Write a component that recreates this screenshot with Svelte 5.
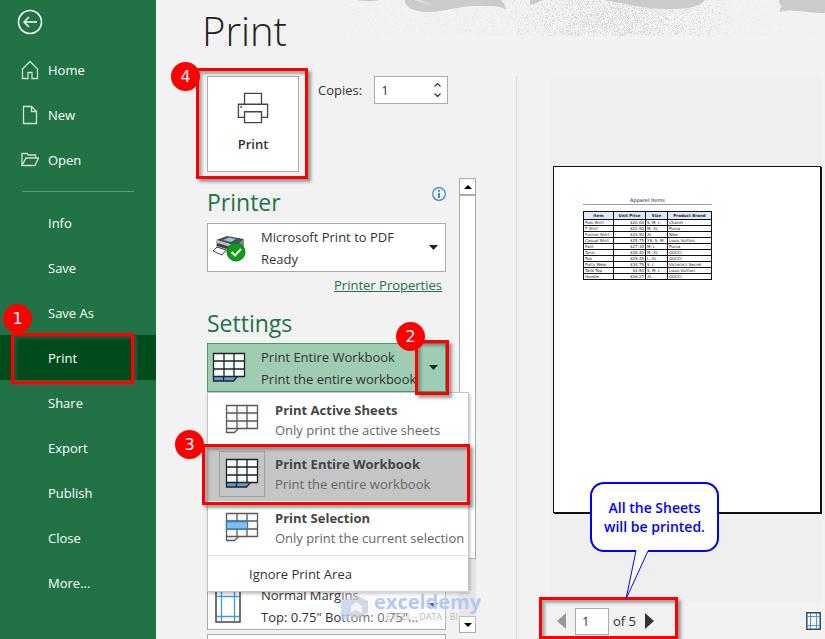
<script lang="ts">
  const topLinks = ['Home', 'New', 'Open'];
  const links = ['Info', 'Save', 'Save As', 'Print', 'Share', 'Export', 'Publish', 'Close', 'More...'];

  const printOptions = [
    { kind: 'active', title: 'Print Active Sheets', detail: 'Only print the active sheets' },
    { kind: 'workbook', title: 'Print Entire Workbook', detail: 'Print the entire workbook' },
    { kind: 'selection', title: 'Print Selection', detail: 'Only print the current selection' }
  ];

  const items = [
    ['Polo Shirt', '$20.00', 'S, M, L', 'Chanel'],
    ['T Shirt', '$22.50', 'M, XL', 'Puma'],
    ['Formal Shirt', '$24.50', 'XL', 'Nike'],
    ['Casual Shirt', '$25.75', 'XS, S, M', 'Louis Vuitton'],
    ['Pant', '$27.30', 'M, L', 'Puma'],
    ['Tunic', '$28.40', 'M, XL', 'GUCCI'],
    ['Top', '$29.45', 'L, XL', 'GUCCI'],
    ['Party Wear', '$34.75', 'S, L', "Victoria's Secret"],
    ['Tank Top', '$4.50', 'S, M, L', 'Louis Vuitton'],
    ['Hoodie', '$26.27', 'XL', 'GUCCI']
  ];

  let selected = $state('workbook');
  let copies = $state('1');
  let pageNo = $state('1');

  // Speckle for the header artwork, scattered between two x positions
  function speckle(count: number, from: number, to: number, seed: number): string {
    const next = () => {
      seed = (seed * 16807) % 2147483647;
      return seed / 2147483647;
    };
    let d = '';
    for (let i = 0; i < count; i++) {
      const x = Math.round(from + ((next() + next()) / 2) * (to - from));
      const y = Math.round(next() * 35);
      d += `M${x} ${y}h1v1h-1z`;
    }
    return d;
  }

  const faintDots = speckle(2600, -20, 510, 7);
  const denseDots = speckle(1700, 180, 400, 91);
</script>

{#snippet sheet(kind: string)}
  <svg class="sheet" width="34" height="32" viewBox="0 0 34 32" aria-hidden="true">
    <path d="M1.5 1.5h31v23h-8l-4 4.500h-19z" fill={kind === 'workbook' ? '#f6fdfb' : '#fafafa'} />
    {#if kind === 'workbook'}
      <path d="M1.500 24.500h24l-4 4.500h-20z" fill="#5b9fd8" />
    {/if}
    <g fill="none" stroke={kind === 'workbook' ? '#222' : '#5a5a5a'} stroke-width="1.3">
      <path d="M1.500 1.500h31v23h-31zM1.500 9h31M1.500 17h31M12 1.500v23M22 1.500v23" />
      {#if kind === 'workbook'}
        <path d="M1.500 24.500v4.500h20l4-4.500M11.500 24.500v4.500" />
      {:else}
        <path d="M1.500 24.500v4h8l4-4" />
      {/if}
    </g>
    {#if kind === 'selection'}
      <path d="M1.500 9.500h21v7.500h-21z" fill="#83bdec" stroke="#2f80c2" stroke-width="1.300" />
    {/if}
  </svg>
{/snippet}

{#snippet caret()}
  <svg width="9" height="5" viewBox="0 0 9 5" aria-hidden="true"><path d="M0 0h9l-4.500 5z" fill="#222" /></svg>
{/snippet}

<div class="backstage">
  <nav class="sidebar">
    <button class="back" aria-label="Back">
      <svg width="26" height="26" viewBox="0 0 26 26" fill="none" stroke="#fff" stroke-width="1.500">
        <circle cx="13" cy="13" r="11.500" />
        <path d="M20 13H7M12 8l-5 5 5 5" />
      </svg>
    </button>
    {#each topLinks as link}
      <a href="#{link}" class="nav-link with-icon">
        <svg width="18" height="20" viewBox="0 0 18 20" fill="none" stroke="#cfe0d5" stroke-width="1.300">
          {#if link === 'Home'}
            <path d="M1 9.500l8-8 8 8M1.500 9v9.500h5.500v-6h4v6h5.500V9" />
          {:else if link === 'New'}
            <path d="M2.500 1.500h8l5 5v12h-13zM10.500 1.500v5h5" />
          {:else}
            <path d="M1 15.500v-12h5l1.500 1.500h7v3M1 15.500l4-7.500h12.500l-3.500 7.500z" />
          {/if}
        </svg>
        {link}
      </a>
    {/each}
    <hr />
    {#each links as link}
      <a href="#{link}" class="nav-link" class:current={link === 'Print'}>
        {link}
        {#if link === 'Print'}
          <span class="mark mark-nav"></span>
          <span class="step step-nav">1</span>
        {/if}
      </a>
    {/each}
  </nav>

  <main>
    <svg class="artwork" width="495" height="37" viewBox="0 0 495 37" aria-hidden="true">
      <path d={faintDots} fill="#eaeaea" />
      <path d={denseDots} fill="#dadada" />
      <path d="M26 0h24c-6 1.500-16 1.500-24 0z" fill="#cbcbcb" />
      <path d="M75 0c0 8 10 12 22 12 20 0 28-6 50-6 12 0 24-1 29 4 0-4-2-7-5-10z" fill="#cbcbcb" />
      <path d="M84 0c6 2 12 4 20 5-5-2-10-3-14-5z" fill="#e2e2e2" />
      <path d="M200 0v5c6-1 9-4 14-5zM274 0c22 4 42 9 64 9 17 0 31-1 37-9z" fill="#cbcbcb" />
      <path d="M449 0c0 3 1 4 3 6-2 2-3 4-2 6 14-4 28 2 45 1V0z" fill="#cbcbcb" />
    </svg>

    <h1>Print</h1>

    <div class="columns">
      <section class="options">
        <div class="job">
          <div class="anchor">
            <button class="print-button">
              <svg width="32" height="32" viewBox="0 0 34 34" fill="#fff" stroke="#444" stroke-width="1.400">
                <path d="M8 13V1.500h18V13" />
                <path d="M8 27H1.500V13h31v14H26" />
                <path d="M8 21h18v11.500H8z" />
                <circle cx="4.500" cy="16" r="1" fill="#444" stroke="none" />
              </svg>
              Print
            </button>
            <span class="mark mark-button"></span>
            <span class="step step-button">4</span>
          </div>
          <label for="copies">Copies:</label>
          <div class="spinner">
            <input id="copies" type="text" bind:value={copies} />
            <div class="arrows">
              <button aria-label="More copies"><svg width="7" height="4" viewBox="0 0 7 4"><path d="M0.500 3.500l3-3 3 3" /></svg></button>
              <button aria-label="Fewer copies"><svg width="7" height="4" viewBox="0 0 7 4"><path d="M0.500 0.500l3 3 3-3" /></svg></button>
            </div>
          </div>
        </div>

        <div class="scroll-area">
          <div class="settings">
            <div class="heading">
              <h2>Printer</h2>
              <button class="info" aria-label="Printer status">
                <svg width="14" height="14" viewBox="0 0 14 14" fill="none" stroke="#2b88d0">
                  <circle cx="7" cy="7" r="6.300" stroke-width="1.200" />
                  <path d="M7 3v1.700M7 6v5" stroke-width="1.800" />
                </svg>
              </button>
            </div>

            <button class="combo">
              <span class="combo-icon">
                <svg width="34" height="28" viewBox="0 0 34 28" aria-hidden="true">
                  <path d="M4 6l11-4 17 3-7 7z" fill="#4b4f54" />
                  <path d="M11 6l6-2.500 7 1.500-5 3z" fill="#8fc3ec" />
                  <path d="M4 6l20 6v9L4 14z" fill="#b9bcc0" />
                  <path d="M24 12l8-7v8l-8 8z" fill="#85898e" />
                  <path d="M5 9l17 5v3L5 12z" fill="#3c3f43" />
                  <path d="M5 13l9 3-4 5-9-4z" fill="#fff" stroke="#444" />
                  <circle cx="24" cy="18" r="9" fill="#0f9a18" stroke="#0a7a12" />
                  <path d="M19.500 18l3.500 3.500 6-6.500" fill="none" stroke="#fff" stroke-width="2" />
                </svg>
              </span>
              <span class="combo-text"><span>Microsoft Print to PDF</span><span>Ready</span></span>
              {@render caret()}
            </button>
            <a class="properties" href="#properties">Printer Properties</a>

            <h2 class="settings-title">Settings</h2>
            <div class="anchor">
              <button class="combo open">
                <span class="combo-icon">{@render sheet('workbook')}</span>
                <span class="combo-text"><span>Print Entire Workbook</span><span>Print the entire workbook</span></span>
                {@render caret()}
              </button>
              <span class="mark mark-caret"></span>
              <span class="step step-caret">2</span>
            </div>

            <div class="menu">
              {#each printOptions as option}
                <button class="option" class:selected={option.kind === selected} onclick={() => (selected = option.kind)}>
                  <span class="option-icon">{@render sheet(option.kind)}</span>
                  <span class="option-text"><b>{option.title}</b><span>{option.detail}</span></span>
                </button>
              {/each}
              <button class="ignore">Ignore Print Area</button>
              <span class="mark mark-option"></span>
              <span class="step step-option">3</span>
            </div>

            <button class="combo margins">
              <span class="combo-icon">
                <svg width="26" height="34" viewBox="0 0 26 34" fill="none" aria-hidden="true">
                  <path d="M1 1h24v32H1z" fill="#fff" stroke="#444" stroke-width="1.500" />
                  <path d="M6.500 2v30M19.500 2v30M2 7.500h22M2 27.500h22" stroke="#3f9bdc" stroke-width="1.300" />
                </svg>
              </span>
              <span class="combo-text"><span>Normal Margins</span><span>Top: 0.75" Bottom: 0.75"...</span></span>
              {@render caret()}
            </button>
            <button class="combo next" aria-label="Scaling"></button>

            <div class="watermark">
              <svg width="28" height="24" viewBox="0 0 28 24" aria-hidden="true">
                <path d="M0 6l8-3v21H0z" fill="#b9cdf5" />
                <path d="M15 0l12 6v12l-12 6-8-4V5z" fill="#c3c8d4" />
                <path d="M15 7l6 4v7l-6-3-5 3v-7z" fill="#eef1f8" />
              </svg>
              <div><strong>exceldemy</strong><small>EXCEL - DATA - BI</small></div>
            </div>
          </div>

          <div class="scrollbar">
            <button aria-label="Scroll up"><svg width="8" height="4" viewBox="0 0 8 4"><path d="M0 4h8l-4-4z" /></svg></button>
            <div class="thumb"></div>
            <div class="track"></div>
            <button aria-label="Scroll down"><svg width="8" height="4" viewBox="0 0 8 4"><path d="M0 0h8l-4 4z" /></svg></button>
          </div>
        </div>
      </section>

      <section class="preview">
        <div class="pane">
          <div class="paper">
            <div class="report">
              <h3>Apparel Items</h3>
              <table>
                <thead>
                  <tr><th>Item</th><th>Unit Price</th><th>Size</th><th>Product Brand</th></tr>
                </thead>
                <tbody>
                  {#each items as row}
                    <tr>
                      {#each row as cell}
                        <td>{cell}</td>
                      {/each}
                    </tr>
                  {/each}
                </tbody>
              </table>
            </div>
          </div>
        </div>
        <div class="pager">
          <button aria-label="Previous page"><svg width="9" height="16" viewBox="0 0 9 16"><path d="M9 0v16L0 8z" fill="#999" /></svg></button>
          <input type="text" aria-label="Page" bind:value={pageNo} />
          <span class="total">of 5</span>
          <button aria-label="Next page"><svg width="9" height="16" viewBox="0 0 9 16"><path d="M0 0v16l9-8z" fill="#333" /></svg></button>
          <button class="show-margins" aria-label="Show margins">
            <svg width="15" height="18" viewBox="0 0 15 18" fill="none">
              <path d="M0.800 0.800h13.400v16.400H0.800z" fill="#fff" stroke="#444" stroke-width="1.500" />
              <path d="M4.500 1v16M10.500 1v16M1 4.500h13M1 13.500h13" stroke="#3f9bdc" stroke-width="1.200" />
            </svg>
          </button>
          <span class="mark mark-pager"></span>
          <div class="callout">
            All the Sheets<br />will be printed.
            <svg width="26" height="50" viewBox="0 0 26 50" aria-hidden="true">
              <path d="M11 0h12v2L2 48 11 2z" fill="#fff" />
              <path d="M11 1L1 49 23 1" fill="none" stroke="#00f" />
            </svg>
          </div>
        </div>
      </section>
    </div>
  </main>
</div>

<style>
  :global(body) {
    margin: 0;
  }

  .backstage {
    display: flex;
    height: 100vh;
    overflow: hidden;
    background: #f2f2f2;
    color: #333;
    font-family: 'Segoe UI', 'Open Sans', sans-serif;
    font-size: 13px;
  }

  .backstage *,
  .backstage {
    box-sizing: border-box;
  }

  button,
  input {
    font: inherit;
    color: inherit;
  }

  button {
    display: flex;
    align-items: center;
    justify-content: center;
    padding: 0;
    border: 0;
    background: none;
  }

  svg {
    display: block;
    flex-shrink: 0;
  }

  h1,
  h2,
  h3 {
    margin: 0;
    font-weight: 400;
  }

  /* Sidebar */
  .sidebar {
    flex: 0 0 156px;
    background: #217346;
  }

  .back {
    margin: 9px 0 12px 17px;
  }

  .nav-link {
    display: flex;
    align-items: center;
    position: relative;
    height: 45px;
    padding-left: 48px;
    color: #fff;
    text-decoration: none;
  }

  .nav-link.with-icon {
    gap: 9px;
    padding-left: 21px;
  }

  .nav-link.current {
    background: #004b1c;
  }

  hr {
    margin: 9px 22px 8px;
    border: 0;
    border-top: 1px solid #56a277;
  }

  /* Numbered annotations */
  .mark {
    position: absolute;
    z-index: 3;
    border: 3px solid #f00;
    box-shadow: 3px 3px 3px rgba(90, 90, 90, 0.6), inset 3px 3px 3px rgba(90, 90, 90, 0.5);
    pointer-events: none;
  }

  .step {
    position: absolute;
    z-index: 4;
    width: 29px;
    height: 29px;
    border-radius: 50%;
    background: #f00;
    color: #fff;
    font: 16px/29px 'DejaVu Sans', sans-serif;
    text-align: center;
  }

  .anchor {
    position: relative;
  }

  .mark-nav {
    inset: -2px 22px -4px 11px;
  }

  .step-nav {
    left: 3px;
    top: -31px;
  }

  .mark-button {
    inset: -8px -9px -7px -11px;
  }

  .step-button {
    left: -36px;
    top: -14px;
  }

  .mark-caret {
    inset: -3px -3px -3px auto;
    width: 34px;
  }

  .step-caret {
    right: 21px;
    top: -21px;
  }

  .mark-option {
    inset: 51px -2px auto -6px;
    height: 61px;
  }

  .step-option {
    left: -33px;
    top: 37px;
  }

  .mark-pager {
    inset: -6px auto 0 0;
    width: 139px;
  }

  /* Main area */
  main {
    display: flex;
    flex: 1;
    flex-direction: column;
    position: relative;
    min-width: 0;
  }

  .artwork {
    position: absolute;
    top: 0;
    right: 0;
  }

  h1 {
    position: relative;
    padding-left: 46px;
    color: #222;
    font-size: 40px;
    font-weight: 300;
    line-height: 62px;
    height: 76px;
  }

  .columns {
    display: flex;
    flex: 1;
    min-height: 0;
  }

  .options {
    display: flex;
    flex: 0 0 361px;
    flex-direction: column;
    min-width: 0;
    padding: 0 40px 0 51px;
    border-right: 1px solid #dcdcdc;
  }

  .job {
    display: flex;
    align-items: flex-start;
  }

  .print-button {
    flex-direction: column;
    gap: 11px;
    width: 92px;
    height: 96px;
    padding-bottom: 4px;
    border: 1px solid #ababab;
    background: #fff;
    font-weight: 600;
  }

  .job label {
    margin: 0 12px 0 19px;
    line-height: 28px;
  }

  .spinner {
    display: flex;
    width: 74px;
    height: 28px;
    border: 1px solid #ababab;
    background: #fff;
  }

  .spinner input {
    flex: 1;
    min-width: 0;
    padding: 0 6px;
    border: 0;
    background: none;
  }

  .arrows {
    display: flex;
    flex-direction: column;
    justify-content: space-evenly;
    width: 19px;
  }

  .arrows path {
    fill: none;
    stroke: #333;
    stroke-width: 1.2;
  }

  .scroll-area {
    display: flex;
    flex: 1;
    gap: 13px;
    min-height: 0;
    margin-top: 6px;
  }

  .settings {
    flex: 1;
    position: relative;
    min-width: 0;
  }

  h2 {
    color: #217346;
    font-size: 23px;
    line-height: 30px;
  }

  .heading {
    display: flex;
    align-items: flex-start;
    justify-content: space-between;
    padding-top: 9px;
    height: 45px;
  }

  .combo {
    width: 100%;
    height: 49px;
    padding-right: 7px;
    border: 1px solid #ababab;
    background: #fff;
    text-align: left;
  }

  .combo-icon {
    flex: 0 0 53px;
    padding-left: 4px;
  }

  .combo-text {
    display: flex;
    flex: 1;
    flex-direction: column;
    min-width: 0;
    line-height: 22px;
    white-space: nowrap;
  }

  .combo.open {
    border-color: #4d9a70;
    background: #9fcdb3;
  }

  .properties {
    display: block;
    padding: 3px 4px 0 0;
    color: #217346;
    line-height: 20px;
    text-align: right;
  }

  .settings-title {
    padding: 13px 0 5px;
  }

  .menu {
    position: relative;
    z-index: 1;
    width: 262px;
    border: 1px solid #c6c6c6;
    background: #fff;
    box-shadow: 1px 2px 3px rgba(0, 0, 0, 0.25);
  }

  .option {
    gap: 10px;
    width: 100%;
    height: 54px;
    padding-left: 11px;
    text-align: left;
  }

  .option-icon {
    display: flex;
    align-items: center;
    justify-content: center;
    width: 46px;
    height: 46px;
    border: 1px solid transparent;
  }

  .option-text {
    display: flex;
    flex: 1;
    flex-direction: column;
    color: #666;
    line-height: 20px;
    white-space: nowrap;
  }

  .option-text b {
    color: #444;
  }

  .option.selected {
    background: #c5c5c5;
  }

  .selected .option-icon {
    border-color: #a0a0a0;
  }

  .ignore {
    justify-content: flex-start;
    width: 100%;
    height: 36px;
    padding-left: 41px;
    border-top: 1px solid #e1e1e1;
  }

  .margins {
    margin: -11px 0 4px;
  }

  .margins .combo-icon {
    padding-left: 7px;
  }

  .watermark {
    display: flex;
    align-items: center;
    gap: 5px;
    position: absolute;
    z-index: 2;
    top: 412px;
    left: 134px;
    padding: 2px 0;
    background: rgba(242, 242, 242, 0.3);
  }

  .watermark svg {
    opacity: 0.7;
  }

  .watermark strong,
  .watermark small {
    display: block;
    line-height: 20px;
  }

  .watermark strong {
    color: #b4c9f3;
    font-size: 20px;
  }

  .watermark small {
    padding-left: 12px;
    color: #bcbcbc;
    font-size: 9px;
    line-height: 9px;
  }

  .scrollbar {
    display: flex;
    flex: 0 0 17px;
    flex-direction: column;
    margin-bottom: 6px;
    background: #e3e3e3;
  }

  .scrollbar button {
    height: 17px;
    border: 1px solid #ababab;
    background: #fff;
  }

  .thumb {
    flex: 364;
    border: 1px solid #ababab;
    background: #fff;
  }

  .track {
    flex: 57;
  }

  /* Preview */
  .preview {
    display: flex;
    flex: 1;
    flex-direction: column;
    min-width: 0;
    padding: 0 4px 0 22px;
  }

  .pane {
    display: flex;
    flex: 1;
    align-items: center;
    margin-left: 12px;
    padding: 0 0 0 2px;
    background: #efefef;
  }

  .paper {
    width: 100%;
    aspect-ratio: 17 / 22;
    padding: 29px;
    border: 1px solid #111;
    background: #fff;
    box-shadow: 1px 1px 0 #111;
  }

  .report {
    width: 129px;
    color: #222;
    font-family: 'DejaVu Sans', sans-serif;
    font-size: 4px;
  }

  h3 {
    margin-bottom: 6px;
    border-bottom: 1px solid #7f9fd8;
    font-size: 5px;
    line-height: 8px;
    text-align: center;
  }

  table {
    width: 100%;
    border-collapse: collapse;
    table-layout: fixed;
  }

  th,
  td {
    height: 6px;
    padding: 0 1px;
    border: 1px solid #111;
    line-height: 5px;
    white-space: nowrap;
  }

  th {
    height: 8px;
    background: #ddebf7;
  }

  th:nth-child(1) {
    width: 30px;
  }

  th:nth-child(2) {
    width: 32px;
  }

  th:nth-child(3) {
    width: 22px;
  }

  td:nth-child(2) {
    text-align: right;
  }

  .pager {
    display: flex;
    align-items: center;
    gap: 9px;
    position: relative;
    height: 36px;
    padding-left: 18px;
  }

  .pager input {
    width: 34px;
    height: 27px;
    padding: 0 6px;
    border: 1px solid #ababab;
    background: #fff;
  }

  .total {
    margin-left: -5px;
  }

  .show-margins {
    margin-left: auto;
  }

  .callout {
    position: absolute;
    z-index: 4;
    bottom: 87px;
    left: 51px;
    width: 129px;
    padding: 14px 0;
    border: 2px solid #00f;
    border-radius: 14px;
    background: #fff;
    color: #00f;
    font-family: 'Comic Sans MS', 'Open Sans', sans-serif;
    font-size: 14px;
    font-weight: 600;
    line-height: 19px;
    text-align: center;
  }

  .callout svg {
    position: absolute;
    top: 100%;
    left: 33px;
  }
</style>
